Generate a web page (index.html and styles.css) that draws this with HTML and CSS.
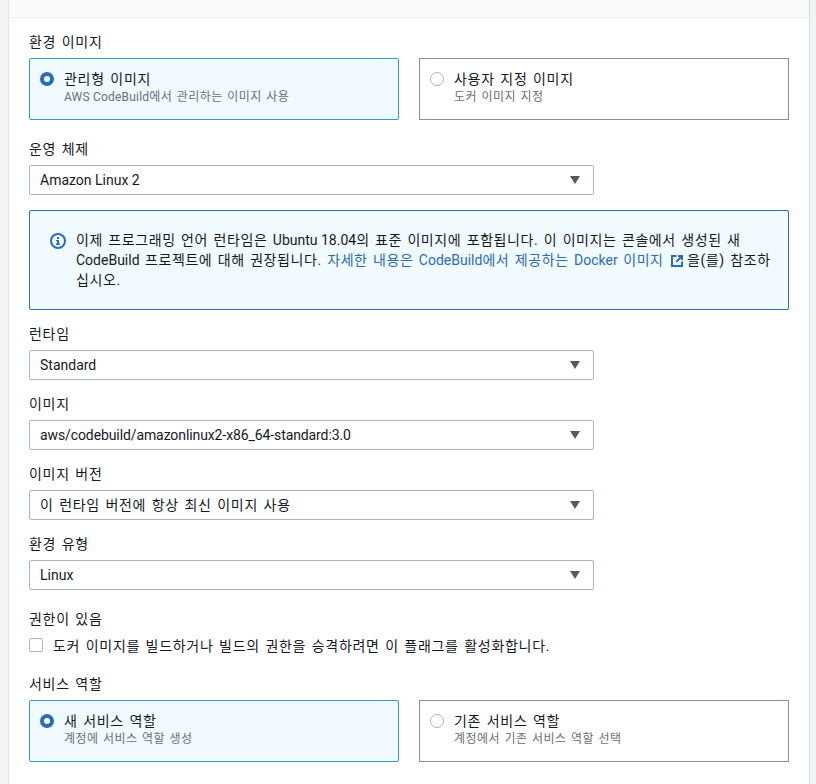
FILE: index.html
```html
<!DOCTYPE html>
<html lang="ko">
<head>
    <meta charset="UTF-8">
    <meta name="viewport" content="width=device-width, initial-scale=1.0">
    <title>환경</title>
    <link rel="stylesheet" href="styles.css">
</head>
<body>
    <div class="panel">
        <div class="panel-header"></div>
        <div class="panel-body">
            <div class="label">환경 이미지</div>
            <div class="tiles">
                <div class="tile selected">
                    <span class="radio on"></span>
                    <div>
                        <div class="tile-title">관리형 이미지</div>
                        <div class="tile-desc"><span class="en">AWS CodeBuild</span>에서 관리하는 이미지 사용</div>
                    </div>
                </div>
                <div class="tile">
                    <span class="radio"></span>
                    <div>
                        <div class="tile-title">사용자 지정 이미지</div>
                        <div class="tile-desc">도커 이미지 지정</div>
                    </div>
                </div>
            </div>

            <div class="label after-tiles">운영 체제</div>
            <div class="select"><span class="en">Amazon Linux 2</span><span class="caret"></span></div>

            <div class="info">
                <svg class="info-icon" width="16" height="16" viewBox="0 0 16 16">
                    <circle cx="8" cy="8" r="7" fill="none" stroke="#2b6cb5" stroke-width="2"/>
                    <rect x="7" y="7" width="2" height="4.5" fill="#2b6cb5"/>
                    <rect x="6" y="10.5" width="4" height="1.5" fill="#2b6cb5"/>
                    <rect x="6" y="7" width="2" height="1.3" fill="#2b6cb5"/>
                    <rect x="7" y="4" width="2" height="2" fill="#2b6cb5"/>
                </svg>
                <p>이제 프로그래밍 언어 런타임은 <span class="en">Ubuntu 18.04</span>의 표준 이미지에 포함됩니다. 이 이미지는 콘솔에서 생성된 새 <span class="en">CodeBuild</span> 프로젝트에 대해 권장됩니다. <a href="#">자세한 내용은 <span class="en">CodeBuild</span>에서 제공하는 <span class="en">Docker</span> 이미지 <svg class="ext-icon" width="13" height="13" viewBox="0 0 13 13"><path d="M5.5 2H1v10h10V7.5" fill="none" stroke="#2b6cb5" stroke-width="2"/><path d="M7 1h5v5h-2V4.400L6 8.400 4.600 7 8.600 3H7z" fill="#2b6cb5"/></svg></a>을(를) 참조하십시오.</p>
            </div>

            <div class="label">런타임</div>
            <div class="select field"><span class="en">Standard</span><span class="caret"></span></div>

            <div class="label">이미지</div>
            <div class="select field"><span class="en narrow">aws/codebuild/amazonlinux2-x86_64-standard:3.0</span><span class="caret"></span></div>

            <div class="label">이미지 버전</div>
            <div class="select field">이 런타임 버전에 항상 최신 이미지 사용<span class="caret"></span></div>

            <div class="label">환경 유형</div>
            <div class="select"><span class="en">Linux</span><span class="caret"></span></div>

            <div class="label after-tiles">권한이 있음</div>
            <div class="check-row">
                <span class="checkbox"></span>
                <span>도커 이미지를 빌드하거나 빌드의 권한을 승격하려면 이 플래그를 활성화합니다.</span>
            </div>

            <div class="label">서비스 역할</div>
            <div class="tiles">
                <div class="tile selected">
                    <span class="radio on"></span>
                    <div>
                        <div class="tile-title">새 서비스 역할</div>
                        <div class="tile-desc">계정에 서비스 역할 생성</div>
                    </div>
                </div>
                <div class="tile">
                    <span class="radio"></span>
                    <div>
                        <div class="tile-title">기존 서비스 역할</div>
                        <div class="tile-desc">계정에서 기존 서비스 역할 선택</div>
                    </div>
                </div>
            </div>
        </div>
    </div>
</body>
</html>
```

FILE: styles.css
```css
html, body {
    height: 100%;
}
body {
    font-family: Roboto, "Noto Sans CJK KR", sans-serif;
    font-size: 14px;
    letter-spacing: 0.7px;
    word-spacing: 1.4px;
    color: #16191f;
    background-color: #f2f3f3;
    margin: 0;
    padding: 0 6px 0 8px;
    overflow: hidden;
}
.en {
    letter-spacing: 0;
    word-spacing: 0;
}
.en.narrow {
    letter-spacing: -0.1px;
}
.panel {
    background: #fff;
    border-left: 1px solid #e4e7e7;
    border-right: 1px solid #d5dbdb;
    height: 100%;
}
.panel-header {
    height: 17px;
    background-color: #fafafa;
    border-bottom: 1px solid #eaeded;
}
.panel-body {
    padding: 14px 20px 0;
}
.label {
    line-height: 20px;
    margin-bottom: 6px;
}
.after-tiles {
    margin-top: 19px;
}
.tiles {
    display: flex;
    gap: 20px;
}
.tile {
    flex: 1;
    display: flex;
    gap: 10px;
    height: 62px;
    box-sizing: border-box;
    padding: 10px;
    border: 1px solid #879596;
}
.tile.selected {
    background-color: #f1faff;
    border-color: #2e9ccb;
    border-radius: 2px;
}
.tile-title {
    line-height: 20px;
}
.tile-desc {
    font-size: 12px;
    line-height: 16px;
    letter-spacing: 0.42px;
    word-spacing: 1.2px;
    color: #687078;
}
.tile-desc .en {
    letter-spacing: 0.2px;
}
.radio {
    flex: none;
    width: 14px;
    height: 14px;
    margin-top: 3px;
    box-sizing: border-box;
    border: 1px solid #aab7b8;
    border-radius: 50%;
    background: #fff;
}
.radio.on {
    border: 4px solid #2b6cb5;
}
.select {
    position: relative;
    width: 565px;
    height: 30px;
    box-sizing: border-box;
    line-height: 28px;
    padding: 0 10px;
    border: 1px solid #aab7b8;
    border-radius: 2px;
}
.select.field {
    margin-bottom: 14px;
}
.caret {
    position: absolute;
    right: 13px;
    top: 10px;
    border-left: 5.5px solid transparent;
    border-right: 5.5px solid transparent;
    border-top: 8px solid #545b64;
}
.info {
    display: flex;
    gap: 10px;
    height: 100px;
    box-sizing: border-box;
    margin: 15px 0 14px;
    padding: 19px 16px 19px 20px;
    background-color: #f1faff;
    border: 1px solid #2b6cb5;
    border-radius: 2px;
}
.info-icon {
    flex: none;
    margin-top: 3px;
}
.info p {
    margin: 0;
    line-height: 20px;
    letter-spacing: 0.58px;
}
.info .en {
    letter-spacing: 0;
}
.info a {
    color: #2b6cb5;
    text-decoration: none;
}
.ext-icon {
    vertical-align: -2px;
    margin: 0 3px 0 2px;
}
.check-row {
    display: flex;
    align-items: center;
    gap: 10px;
    height: 20px;
    margin-bottom: 19px;
}
.checkbox {
    flex: none;
    width: 14px;
    height: 14px;
    box-sizing: border-box;
    background: #fff;
    border: 1px solid #aab7b8;
    border-radius: 2px;
}
```
